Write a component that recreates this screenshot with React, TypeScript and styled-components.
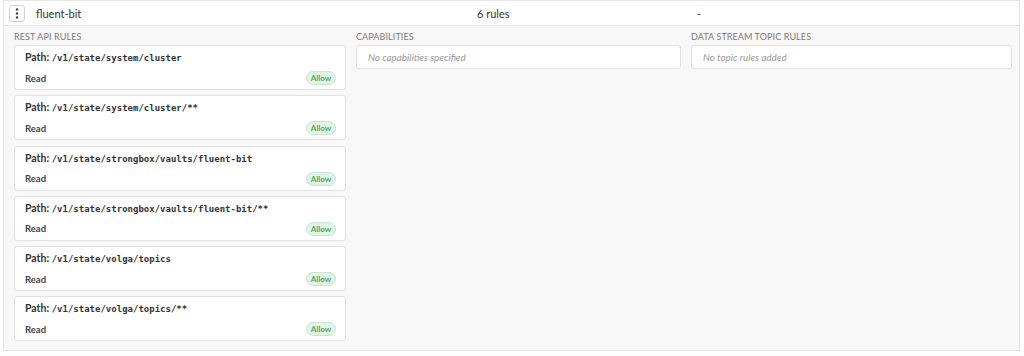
import React from "react";
import styled, { createGlobalStyle } from "styled-components";

const GlobalStyle = createGlobalStyle`
  html, body { margin: 0; padding: 0; background: #ffffff; }
  body { font-family: Lato, "Liberation Sans", sans-serif; color: #333; }
  * { box-sizing: border-box; }
`;

const Table = styled.div`
  margin-left: 3px;
  width: 1017px;
  border-left: 1px solid #e4e4e4;
  border-right: 1px solid #e4e4e4;
`;

const HeaderRow = styled.div`
  display: grid;
  grid-template-columns: 473px 220px 1fr;
  align-items: center;
  height: 26px;
  border-top: 1px solid #e6e6e6;
  border-bottom: 1px solid #e6e6e6;
  background: #fff;
  font-size: 11px;
  color: #333;
`;

const NameCell = styled.div`
  display: flex;
  align-items: center;
  gap: 11px;
  padding-left: 5px;
`;

const Cell = styled.div`
  white-space: nowrap;
`;

const KebabButton = styled.button`
  width: 16px;
  height: 17px;
  padding: 0;
  border: 1px solid #d2d2d2;
  border-radius: 3px;
  background: #fff;
  display: flex;
  align-items: center;
  justify-content: center;
  cursor: pointer;
`;

const Expanded = styled.div`
  display: grid;
  grid-template-columns: 332px 325px 321px;
  column-gap: 10px;
  align-items: start;
  padding: 5px 6px 9px 10px;
  background: #f8f8f8;
  border-bottom: 1px solid #e4e4e4;
`;

const Column = styled.div`
  display: flex;
  flex-direction: column;
`;

const SectionLabel = styled.div`
  font-size: 9px;
  line-height: 12px;
  height: 12px;
  color: #7a7a7a;
  letter-spacing: 0.1px;
  text-transform: uppercase;
  margin-bottom: 2px;
`;

const CardList = styled.div`
  display: flex;
  flex-direction: column;
  gap: 5.3px;
`;

const RuleCard = styled.div`
  height: 45px;
  background: #fff;
  border: 1px solid #e2e2e2;
  border-radius: 3px;
  padding: 5px 9px 0 10px;
  display: flex;
  flex-direction: column;
`;

const PathLine = styled.div`
  font-size: 10.5px;
  line-height: 13px;
  font-weight: 700;
  color: #333;
  white-space: nowrap;
`;

const Mono = styled.span`
  font-family: "DejaVu Sans Mono", "Liberation Mono", monospace;
  font-size: 9px;
  font-weight: 700;
  color: #333;
`;

const RuleFooter = styled.div`
  margin-top: 6px;
  height: 14px;
  display: flex;
  align-items: center;
  justify-content: space-between;
`;

const Access = styled.span`
  font-size: 9.5px;
  font-weight: 700;
  color: #444;
`;

const Badge = styled.span`
  height: 14px;
  width: 30px;
  display: inline-flex;
  align-items: center;
  justify-content: center;
  border-radius: 7px;
  background: #e2f4e7;
  border: 1px solid #c6e8cf;
  color: #53a86a;
  font-size: 8px;
  font-weight: 700;
`;

const EmptyBox = styled.div`
  height: 24px;
  background: #fff;
  border: 1px solid #e2e2e2;
  border-radius: 3px;
  padding-left: 11px;
  display: flex;
  align-items: center;
  font-size: 9.8px;
  font-style: italic;
  color: #999;
`;

const rules = [
  "/v1/state/system/cluster",
  "/v1/state/system/cluster/**",
  "/v1/state/strongbox/vaults/fluent-bit",
  "/v1/state/strongbox/vaults/fluent-bit/**",
  "/v1/state/volga/topics",
  "/v1/state/volga/topics/**",
];

const Kebab = () => (
  <svg width="4" height="11" viewBox="0 0 4 11" aria-hidden>
    <circle cx="2" cy="1.5" r="1.2" fill="#444" />
    <circle cx="2" cy="5.5" r="1.2" fill="#444" />
    <circle cx="2" cy="9.5" r="1.2" fill="#444" />
  </svg>
);

export default function App() {
  return (
    <>
      <GlobalStyle />
      <Table>
        <HeaderRow>
          <NameCell>
            <KebabButton aria-label="More actions">
              <Kebab />
            </KebabButton>
            <Cell>fluent-bit</Cell>
          </NameCell>
          <Cell>6 rules</Cell>
          <Cell>-</Cell>
        </HeaderRow>
        <Expanded>
          <Column>
            <SectionLabel>REST API Rules</SectionLabel>
            <CardList>
              {rules.map((r) => (
                <RuleCard key={r}>
                  <PathLine>
                    Path: <Mono>{r}</Mono>
                  </PathLine>
                  <RuleFooter>
                    <Access>Read</Access>
                    <Badge>Allow</Badge>
                  </RuleFooter>
                </RuleCard>
              ))}
            </CardList>
          </Column>
          <Column>
            <SectionLabel>Capabilities</SectionLabel>
            <EmptyBox>No capabilities specified</EmptyBox>
          </Column>
          <Column>
            <SectionLabel>Data Stream Topic Rules</SectionLabel>
            <EmptyBox>No topic rules added</EmptyBox>
          </Column>
        </Expanded>
      </Table>
    </>
  );
}
